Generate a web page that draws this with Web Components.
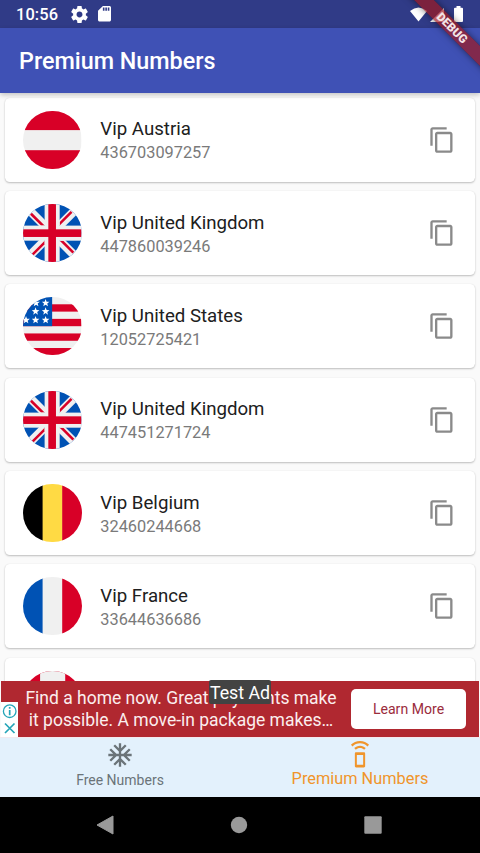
<!DOCTYPE html>
<html lang="en">
<head>
<meta charset="utf-8">
<title>Premium Numbers</title>
<style>
html,body{margin:0;height:100%;overflow:hidden;font-family:Roboto,"Noto Sans",sans-serif;background:#fafafa}
</style>
</head>
<body>
<phone-screen></phone-screen>
<script>
function define(name, html) {
  const t = document.createElement('template');
  t.innerHTML = html;
  customElements.define(name, class extends HTMLElement {
    constructor() {
      super();
      this.attachShadow({mode: 'open'}).append(t.content.cloneNode(true));
    }
  });
}

define('status-bar', `
<style>
:host{display:flex;box-sizing:border-box;height:28px;background:#303b87;color:#fff;align-items:center;padding:0 17px 0 16px;font-size:16.4px;font-weight:500}
svg{display:block;fill:#fff}
.time{width:55px;letter-spacing:.1px;padding-top:1px}
.sd{margin-left:10px}.gap{flex:1}
.wifi{margin-right:1px}.bat{margin-left:8px}
</style>
<span class="time">10:56</span>
<svg width="17" height="17" viewBox="2 2 20 20"><path d="M19.43 12.98c.04-.32.07-.64.07-.98s-.03-.66-.07-.98l2.11-1.65c.19-.15.24-.42.12-.64l-2-3.46c-.12-.22-.39-.3-.61-.22l-2.49 1c-.52-.4-1.08-.73-1.69-.98l-.38-2.65C14.46 2.18 14.25 2 14 2h-4c-.25 0-.46.18-.49.42l-.38 2.65c-.61.25-1.17.59-1.69.98l-2.49-1c-.23-.09-.49 0-.61.22l-2 3.46c-.13.22-.07.49.12.64l2.11 1.65c-.04.32-.07.65-.07.98s.03.66.07.98l-2.11 1.65c-.19.15-.24.42-.12.64l2 3.46c.12.22.39.3.61.22l2.49-1c.52.4 1.08.73 1.69.98l.38 2.65c.03.24.24.42.49.42h4c.25 0 .46-.18.49-.42l.38-2.65c.61-.25 1.17-.59 1.69-.98l2.49 1c.23.09.49 0 .61-.22l2-3.46c.12-.22.07-.49-.12-.64l-2.11-1.65zM12 15.5c-1.93 0-3.5-1.57-3.5-3.5s1.57-3.5 3.5-3.5 3.5 1.57 3.5 3.5-1.57 3.5-3.5 3.5z"/></svg>
<svg class="sd" width="13" height="15.500" viewBox="4 2 16 20" preserveAspectRatio="none"><path d="M18 2h-8L4.02 8 4 20c0 1.1.9 2 2 2h12c1.1 0 2-.9 2-2V4c0-1.1-.9-2-2-2zm-6 6h-2V4h2v4zm3 0h-2V4h2v4zm3 0h-2V4h2v4z"/></svg>
<span class="gap"></span>
<svg class="wifi" width="19" height="15" viewBox="0 0 19 15"><path d="M1 4Q9.5-3 18 4L9.5 14.5Z"/></svg>
<svg width="17" height="15" viewBox="0 0 17 15"><path d="M1 15L15 1V15Z"/></svg>
<svg class="bat" width="9" height="16" viewBox="0 0 9 16"><path d="M2.5 0h4v1.7H8q1 0 1 1V15q0 1-1 1H1q-1 0-1-1V2.700q0-1 1-1h1.500z"/></svg>`);

define('app-bar', `
<style>
:host{display:flex;box-sizing:border-box;height:65.3px;background:#3f51b5;color:#fff;align-items:center;padding:1px 0 1px 19px;font-size:23.33px;font-weight:500;position:relative;z-index:1;box-shadow:0 2px 5px rgba(0,0,0,.22)}
</style><slot></slot>`);

define('debug-ribbon', `
<style>
:host{position:absolute;top:0;right:0;width:90px;height:90px;overflow:hidden;z-index:3}
div{position:absolute;left:2px;top:21px;width:120px;height:14px;transform:rotate(45deg);background:rgba(160,22,28,.68);box-shadow:0 0 7px rgba(0,0,0,.5);color:#f3e3e6;font-size:11.9px;font-weight:900;line-height:14px;text-align:center}
</style><div>DEBUG</div>`);

const red = '#d80027', white = '#f0f0f0', blue = '#0052b4';
const rect = (x, y, w, h, f) => `<rect x="${x}" y="${y}" width="${w}" height="${h}" fill="${f}"/>`;
const star = (x, y) => {
  const p = [];
  for (let i = 0; i < 10; i++) {
    const r = i % 2 ? 1.7 : 4, a = Math.PI * i / 5;
    p.push((x + r * Math.sin(a)).toFixed(2) + ',' + (y - r * Math.cos(a)).toFixed(2));
  }
  return `<polygon points="${p.join(' ')}" fill="#fff"/>`;
};
const vertical = (a, b, c) => rect(0, 0, 20, 58, a) + rect(19.500, 0, 20, 58, b) + rect(39, 0, 20, 58, c);
const ukDiagonals = [[1, 1], [-1, 1], [1, -1], [-1, -1]].map(([a, b]) =>
  `<g transform="translate(29 29) scale(${a} ${b})"><path d="M7.6 7.6L24 24" stroke="${white}" stroke-width="8.5"/></g>`).join('');
const ukReds = [0, 90, 180, 270].map(r =>
  `<g transform="rotate(${r} 29 29)"><path d="M36.500 36.500H40.100L51 47.400L49.200 49.200Z" fill="${red}"/></g>`).join('');
const flags = {
  at: rect(0, 0, 58, 58, white) + rect(0, 0, 58, 19, red) + rect(0, 39, 58, 19, red),
  be: vertical('#000', '#ffda44', red),
  fr: vertical(blue, white, red),
  ca: rect(0, 0, 58, 58, red) + rect(17, 0, 25, 58, white),
  us: rect(0, 0, 58, 58, white) + [1, 3, 5, 7].map(i => rect(0, i * 7.25, 58, 7.3, red)).join('') +
      rect(0, 0, 29, 29, blue) +
      [[22.500, 6], [13, 6], [22.500, 14.300], [12.500, 14.300], [22.500, 23], [12.500, 23], [3, 23]].map(s => star(...s)).join(''),
  gb: rect(0, 0, 58, 58, blue) + ukDiagonals + ukReds +
      rect(21.500, 0, 15, 58, white) + rect(0, 21.500, 58, 15, white) +
      rect(25.200, 0, 7.600, 58, red) + rect(0, 25.200, 58, 7.600, red)
};
customElements.define('country-flag', class extends HTMLElement {
  constructor() { super(); this.attachShadow({mode: 'open'}); }
  connectedCallback() {
    this.shadowRoot.innerHTML = `<style>:host{display:block;width:58.3px;height:58.3px;border-radius:50%;overflow:hidden}svg{display:block;width:100%;height:100%}</style><svg viewBox="0 0 58 58">${flags[this.getAttribute('code')]}</svg>`;
  }
});

customElements.define('number-card', class extends HTMLElement {
  constructor() { super(); this.attachShadow({mode: 'open'}); }
  connectedCallback() {
    this.shadowRoot.innerHTML = `
<style>
:host{display:flex;box-sizing:border-box;height:84px;flex:none;align-items:center;gap:18.7px;padding:0 18.7px;border-radius:4.67px;background:#fff;box-shadow:0 1px 2px rgba(0,0,0,.24),0 0 1px rgba(0,0,0,.1)}
.text{flex:1;display:flex;flex-direction:column;gap:2px;padding-top:3px}
.name{font-size:18.67px;line-height:22px;color:#202020}
.num{font-size:16.33px;line-height:22px;color:#7a7a7a}
svg{display:block;width:28px;height:28px;fill:#8a8a8a;margin-right:.7px}
</style>
<country-flag code="${this.getAttribute('code')}"></country-flag>
<div class="text"><span class="name"><slot></slot></span><span class="num"><slot name="number"></slot></span></div>
<svg viewBox="0 0 24 24"><path d="M16 1H4c-1.1 0-2 .9-2 2v14h2V3h12V1zm3 4H8c-1.1 0-2 .9-2 2v14c0 1.1.9 2 2 2h11c1.1 0 2-.9 2-2V7c0-1.1-.9-2-2-2zm0 16H8V7h11v14z"/></svg>`;
  }
});

define('number-list', `
<style>
:host{display:flex;flex-direction:column;gap:9.33px;box-sizing:border-box;height:588px;overflow:hidden;padding:4.4px 4.67px 0;background:#fafafa}
</style><slot></slot>`);

define('ad-banner', `
<style>
:host{display:flex;box-sizing:border-box;height:56px;margin:0 1px;background:#b02830;position:relative;align-items:center;color:#fbeeee}
.copy{width:360px;text-align:center;font-size:17.5px;line-height:22px;white-space:nowrap}
.button{position:absolute;left:350px;top:8px;width:115px;height:40px;border-radius:5px;background:#fff;color:#9b2c3c;font-size:14.1px;line-height:41px;text-align:center}
.marks{position:absolute;left:0;bottom:0;width:17px;height:35px;background:#fff;display:block}
.tag{position:absolute;left:208px;top:-1px;width:62px;height:24px;box-sizing:border-box;background:#434343;border-radius:2px;color:#fff;font-size:17.8px;line-height:26px;text-align:center;white-space:nowrap}
</style>
<div class="copy"><div>Find a home now. Great payments make</div><div>it possible. A move-in package makes…</div></div>
<div class="button">Learn More</div>
<svg class="marks" viewBox="0 0 17 35" fill="none" stroke="#25a5b8" stroke-width="1.3"><circle cx="8.700" cy="9.200" r="6.300"/><path d="M8.700 8V13.200M8.700 5v1.700" stroke-width="1.700"/><path d="M4 21.500L13.500 31M13.500 21.500L4 31" stroke-width="1.700"/></svg>
<div class="tag">Test Ad</div>`);

define('tab-item', `
<style>
:host{display:flex;flex:1;flex-direction:column;align-items:center;color:#6b7479;font-size:14px}
.label{line-height:18px;margin-top:2.5px}
:host([active]){color:#f0952b;font-size:16.33px}
:host([active]) .label{margin-top:1.5px}
::slotted(svg){display:block;width:28px;height:28px;fill:currentColor}
</style>
<slot name="icon"></slot><span class="label"><slot></slot></span>`);

define('tab-bar', `
<style>
:host{display:flex;box-sizing:border-box;height:59.7px;padding-top:2.6px;background:#e3f1fc;border-top:1px solid #f3e9ee}
</style><slot></slot>`);

define('system-nav', `
<style>
:host{display:flex;height:56px;background:#000;align-items:center;justify-content:space-around;box-sizing:border-box;padding:0 40px 0 38.5px}
svg{display:block;fill:#999}
</style>
<svg width="20" height="20" viewBox="0 0 20 20"><path d="M2 10L18 1V19Z" stroke="#999" stroke-linejoin="round"/></svg>
<svg width="20" height="20" viewBox="0 0 20 20"><circle cx="10" cy="10" r="8.200"/></svg>
<svg width="20" height="20" viewBox="0 0 20 20"><rect x="1.300" y="1.300" width="17.400" height="17.400" rx="1"/></svg>`);

define('phone-screen', `
<style>
:host{display:flex;flex-direction:column;position:relative;width:480px;height:853px;overflow:hidden;background:#fafafa}
</style>
<status-bar></status-bar>
<app-bar>Premium Numbers</app-bar>
<number-list>
<number-card code="at">Vip Austria<span slot="number">436703097257</span></number-card>
<number-card code="gb">Vip United Kingdom<span slot="number">447860039246</span></number-card>
<number-card code="us">Vip United States<span slot="number">12052725421</span></number-card>
<number-card code="gb">Vip United Kingdom<span slot="number">447451271724</span></number-card>
<number-card code="be">Vip Belgium<span slot="number">32460244668</span></number-card>
<number-card code="fr">Vip France<span slot="number">33644636686</span></number-card>
<number-card code="ca"></number-card>
</number-list>
<ad-banner></ad-banner>
<tab-bar>
<tab-item>Free Numbers<svg slot="icon" viewBox="0 0 24 24"><path d="M22 11h-4.170l3.240-3.240-1.410-1.420L15 11h-2V9l4.660-4.660-1.420-1.410L13 6.170V2h-2v4.170L7.760 2.930 6.340 4.340 11 9v2H9L4.340 6.340 2.930 7.760 6.170 11H2v2h4.170l-3.240 3.240 1.410 1.420L9 13h2v2l-4.660 4.660 1.420 1.410L11 17.830V22h2v-4.170l3.240 3.240 1.420-1.410L13 15v-2h2l4.660 4.660 1.410-1.420L17.830 13H22z"/></svg></tab-item>
<tab-item active>Premium Numbers<svg slot="icon" viewBox="0 0 24 24"><path fill-rule="evenodd" d="M15.400 9.600H8.600c-.55 0-1 .45-1 1v11.100c0 .55.45 1 1 1h6.800c.55 0 1-.45 1-1V10.600c0-.55-.45-1-1-1zm-.700 10.700H9.300V12h5.400zM7.050 6.050l1.410 1.410C9.370 6.560 10.620 6 12 6s2.630.56 3.540 1.460l1.410-1.410C15.680 4.780 13.930 4 12 4s-3.680.78-4.950 2.050zM12 0C8.960 0 6.210 1.230 4.220 3.220l1.410 1.410C7.260 3.010 9.510 2 12 2s4.740 1.010 6.360 2.640l1.410-1.410C17.790 1.230 15.040 0 12 0z"/></svg></tab-item>
</tab-bar>
<system-nav></system-nav>
<debug-ribbon></debug-ribbon>`);
</script>
</body>
</html>
